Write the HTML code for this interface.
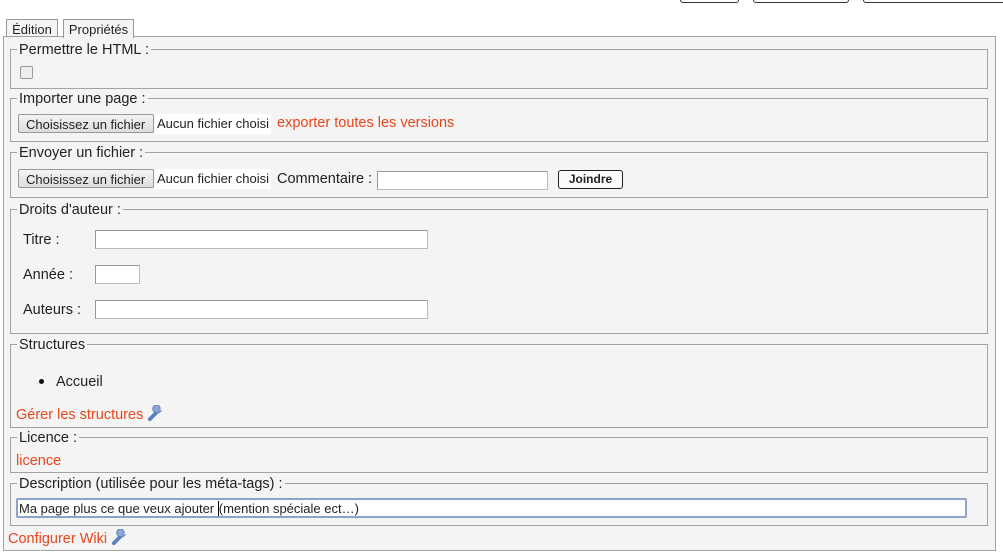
<!DOCTYPE html>
<html><head><meta charset="utf-8"><style>
body{margin:0;width:1003px;height:560px;background:#fff;font-family:"Liberation Sans",sans-serif;font-size:14.5px;color:#222;position:relative;overflow:hidden}
.a{position:absolute}
.fs{position:absolute;left:10px;width:976px;border:1px solid #a3a3a3}
.lg{position:absolute;left:6px;top:-8px;background:#f4f4f4;padding:0 2px;line-height:16px;white-space:nowrap}
.btn{position:absolute;height:19px;border:1px solid #999;border-radius:2px;background:linear-gradient(#f4f4f4,#ddd);font-size:13px;line-height:19px;padding:0 7px;box-sizing:border-box;color:#222;white-space:nowrap}
.nf{position:absolute;font-size:13px;background:#fff;line-height:20px;padding:0 2px;white-space:nowrap}
.red{color:#e8461b}
.in{position:absolute;background:#fff;border:1px solid #bbb;border-top-color:#999;border-left-color:#999;box-sizing:border-box}
.lab{position:absolute;left:12px;font-size:14.5px}
svg{vertical-align:-3px}
</style></head><body>
<div class="a" style="left:680px;top:-8px;width:57px;height:9px;border:1px solid #333;border-radius:3px"></div>
<div class="a" style="left:753px;top:-8px;width:94px;height:9px;border:1px solid #333;border-radius:3px"></div>
<div class="a" style="left:863px;top:-8px;width:145px;height:9px;border:1px solid #333;border-radius:3px"></div>

<div class="a" style="left:6px;top:19px;width:50px;height:17px;border:1px solid #999;border-bottom:none;background:#f4f4f4;font-size:13px;line-height:19px;text-align:center">Édition</div>
<div class="a" style="left:63px;top:19px;width:69px;height:18px;border:1px solid #999;border-bottom:none;background:#f4f4f4;font-size:13px;line-height:19px;text-align:center;z-index:2">Propriétés</div>
<div class="a" style="left:3px;top:36px;width:991px;height:513px;border:1px solid #a3a3a3;background:#f4f4f4"></div>

<div class="fs" style="top:49px;height:38px"><div class="lg">Permettre le HTML :</div>
<div class="a" style="left:9px;top:16px;width:11px;height:11px;border:1px solid #999;border-radius:2px;background:#eee"></div></div>

<div class="fs" style="top:98px;height:42px"><div class="lg">Importer une page :</div>
<div class="btn" style="left:7px;top:15px;width:136px">Choisissez un fichier</div>
<div class="nf" style="left:144px;top:15px">Aucun fichier choisi</div>
<div class="a red" style="left:266px;top:16px">exporter toutes les versions</div></div>

<div class="fs" style="top:152px;height:44px"><div class="lg">Envoyer un fichier :</div>
<div class="btn" style="left:7px;top:16px;width:136px">Choisissez un fichier</div>
<div class="nf" style="left:144px;top:16px">Aucun fichier choisi</div>
<div class="a" style="left:266px;top:18px">Commentaire :</div>
<div class="in" style="left:366px;top:18px;width:171px;height:19px"></div>
<div class="a" style="left:547px;top:17px;width:63px;height:17px;border:1px solid #222;border-radius:3px;font-size:12px;font-weight:bold;line-height:17px;text-align:center;background:#fafafa">Joindre</div></div>

<div class="fs" style="top:209px;height:123px"><div class="lg">Droits d'auteur :</div>
<div class="lab" style="top:22px">Titre :</div>
<div class="in" style="left:84px;top:20px;width:333px;height:19px"></div>
<div class="lab" style="top:57px">Année :</div>
<div class="in" style="left:84px;top:55px;width:45px;height:19px"></div>
<div class="lab" style="top:92px">Auteurs :</div>
<div class="in" style="left:84px;top:90px;width:333px;height:19px"></div></div>

<div class="fs" style="top:344px;height:82px"><div class="lg">Structures</div>
<div class="a" style="left:28px;top:34px;width:5px;height:5px;border-radius:50%;background:#111"></div>
<div class="a" style="left:45px;top:29px">Accueil</div>
<div class="a red" style="left:5px;top:60px;white-space:nowrap">Gérer les structures <svg width="17" height="17" viewBox="0 0 18 18"><path d="M3 15 L10 8" stroke="#5b7fc0" stroke-width="4" stroke-linecap="round"/><path d="M10 8 a4 4 0 1 1 4 -4 l-2 1 l1 2 l2 -1 a4 4 0 0 1 -5 2" fill="#8fa8d8" stroke="#5b7fc0"/></svg></div></div>

<div class="fs" style="top:437px;height:34px"><div class="lg">Licence :</div>
<div class="a red" style="left:5px;top:15px">licence</div></div>

<div class="fs" style="top:483px;height:41px"><div class="lg">Description (utilisée pour les méta-tags) :</div>
<div class="a" style="left:5px;top:14px;width:951px;height:20px;border:2px solid #8ea2c8;border-radius:2px;background:#fff;font-size:13px;line-height:17px;padding-left:1px;box-sizing:border-box;white-space:nowrap">Ma page plus ce que veux ajouter <span style="border-left:1px solid #000"></span>(mention spéciale ect…)</div></div>

<div class="a red" style="left:8px;top:529px;white-space:nowrap">Configurer Wiki <svg width="17" height="17" viewBox="0 0 18 18"><path d="M3 15 L10 8" stroke="#5b7fc0" stroke-width="4" stroke-linecap="round"/><path d="M10 8 a4 4 0 1 1 4 -4 l-2 1 l1 2 l2 -1 a4 4 0 0 1 -5 2" fill="#8fa8d8" stroke="#5b7fc0"/></svg></div>
</body></html>
